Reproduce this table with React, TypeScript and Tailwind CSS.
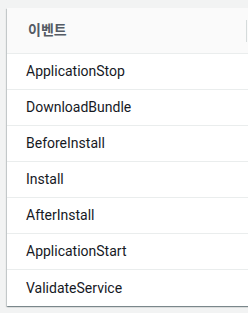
const events = [
  "ApplicationStop",
  "DownloadBundle",
  "BeforeInstall",
  "Install",
  "AfterInstall",
  "ApplicationStart",
  "ValidateService",
];

export default function App() {
  return (
    <div
      className="h-[313px] w-[248px] overflow-hidden bg-[#f2f3f3] pl-[7px] pt-[8px]"
      style={{ fontFamily: 'Roboto, "Noto Sans CJK KR", sans-serif' }}
    >
      <div className="w-[270px] bg-white shadow-[0_1px_1px_0_rgba(0,28,36,0.3),1px_1px_1px_0_rgba(0,28,36,0.15),-1px_1px_1px_0_rgba(0,28,36,0.15)]">
        <div className="flex h-[46px] items-center border-b border-[#eaeded] bg-[#fafafa]">
          <div className="w-[239px] pl-[21px] text-[14px] font-semibold text-[#545b64]">이벤트</div>
          <div className="h-[22px] w-px bg-[#d5dbdb]" />
        </div>
        {events.map((name) => (
          <div
            key={name}
            className="flex h-[36px] items-center border-b border-[#eaeded] pl-[19px] text-[14px] text-[#16191f] last:border-b-0"
          >
            {name}
          </div>
        ))}
      </div>
    </div>
  );
}
